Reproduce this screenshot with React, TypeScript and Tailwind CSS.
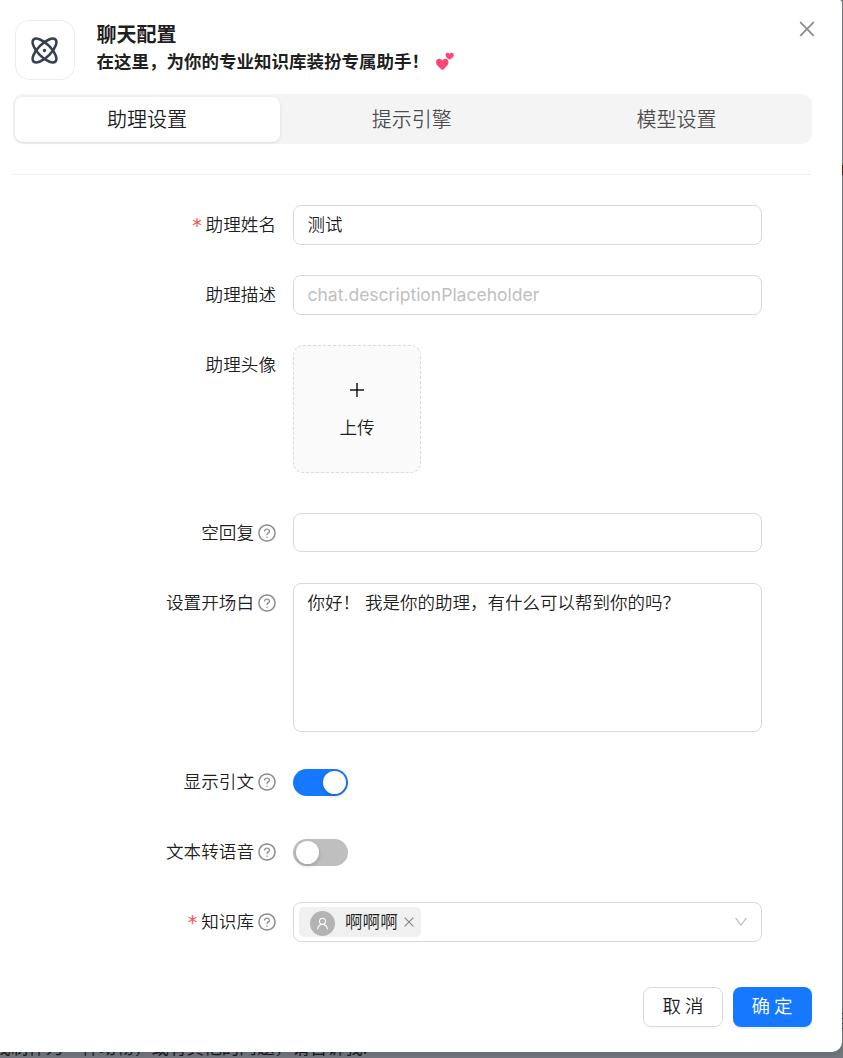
import React, { useState } from 'react';
import {
  AiOutlineClose,
  AiOutlineDown,
  AiOutlinePlus,
  AiOutlineQuestionCircle,
  AiOutlineUser,
} from 'react-icons/ai';

const TABS = ['助理设置', '提示引擎', '模型设置'];

interface FormRowProps {
  label: string;
  required?: boolean;
  help?: boolean;
  className?: string;
  children: React.ReactNode;
}

const FormRow: React.FC<FormRowProps> = ({ label, required = false, help = false, className = '', children }) => (
  <div className={`flex items-start ${className}`}>
    <div className="flex h-10 w-[264px] shrink-0 items-center justify-end">
      {required && <span className="mr-[3px] pt-0.5 font-['DejaVu_Sans_Mono',monospace] text-[19px] text-[#ff4d4f]">*</span>}
      <span className={help ? '' : 'mr-px'}>{label}</span>
      {help && <AiOutlineQuestionCircle size={20} className="ml-[3px] text-black/45" />}
    </div>
    <div className="ml-4 w-[469px]">{children}</div>
  </div>
);

interface SwitchProps {
  checked: boolean;
  onChange: (checked: boolean) => void;
  label: string;
}

const Switch: React.FC<SwitchProps> = ({ checked, onChange, label }) => (
  <div className="flex h-[41px] items-center">
    <button
      type="button"
      role="switch"
      aria-checked={checked}
      aria-label={label}
      onClick={() => onChange(!checked)}
      className={`flex h-[27px] w-[55px] items-center rounded-full px-[2.5px] ${
        checked ? 'justify-end bg-[#1677ff]' : 'justify-start bg-[#bfbfbf]'
      }`}
    >
      <span className="size-[23px] rounded-full bg-white shadow-[0_2px_4px_rgba(0,35,11,0.2)]" />
    </button>
  </div>
);

const AtomLogo = () => (
  <svg
    width="31"
    height="31"
    viewBox="0 0 24 24"
    fill="none"
    stroke="#344054"
    strokeWidth="2"
    strokeLinecap="round"
    strokeLinejoin="round"
  >
    <path strokeWidth="2.6" d="M12 12h.01" />
    <path d="M15.54 15.54c-4.69 4.68-10.07 6.9-12.03 4.95-1.95-1.96.27-7.34 4.95-12.03 4.69-4.68 10.07-6.9 12.03-4.95 1.95 1.96-.27 7.34-4.95 12.03Z" />
    <path d="M15.54 8.46c4.68 4.69 6.9 10.07 4.95 12.03-1.96 1.95-7.34-.27-12.03-4.95C3.78 10.85 1.56 5.47 3.51 3.51c1.96-1.95 7.34.27 12.03 4.95Z" />
  </svg>
);

const Hearts = () => (
  <svg width="20" height="19" viewBox="0 0 20 19" fill="#ff4777">
    <path d="M7.4 18.2C5 16.4 1 13.4 1 10.1c0-2 1.4-3.4 3.2-3.4 1.4 0 2.5.7 3.1 1.8.7-1.1 1.8-1.7 3.1-1.7 1.9 0 3.1 1.4 3.1 3.2 0 3.4-3.6 6.2-6.1 8.2Z" />
    <path d="M14.6 7.7c-1.8-1.2-4-2.7-4.1-4.7 0-1.3.8-2.2 2-2.2 1 0 1.7.4 2.1 1.2.5-.8 1.2-1.2 2.1-1.2 1.3 0 2.1 1 2.1 2.1 0 2-2.3 3.6-4.2 4.8Z" />
  </svg>
);

const inputClass =
  'block w-full rounded-lg border border-[#d9d9d9] bg-white px-[13.5px] text-[17.5px] outline-none placeholder:font-normal placeholder:text-[#bfbfbf]';

const App = () => {
  const [activeTab, setActiveTab] = useState(0);
  const [showQuote, setShowQuote] = useState(true);
  const [tts, setTts] = useState(false);

  return (
    <div className="relative h-[1058px] w-[843px] overflow-hidden bg-[#747a80] font-[Inter,'Noto_Sans_CJK_SC',sans-serif] text-[17.6px] leading-[27.5px] font-[350] text-black/90">
      {/* Dialog */}
      <div className="relative z-10 flex h-[1052px] w-[842px] flex-col rounded-tr-[3px] rounded-br-[10px] bg-white pr-[30px] pl-[13px] shadow-[0_3px_8px_rgba(0,0,0,0.15)]">
        <header className="flex h-[94px] shrink-0 items-start">
          <div className="mt-5 ml-[1.5px] flex size-[60px] items-center justify-center rounded-[14px] border border-[#eaecf0]">
            <AtomLogo />
          </div>
          <div className="mt-[21px] ml-[22px] text-[17.5px] font-bold">
            <h1 className="text-[20px] leading-7">聊天配置</h1>
            <p className="-mt-px flex items-center">
              在这里，为你的专业知识库装扮专属助手！
              <span className="ml-1.5"><Hearts /></span>
            </p>
          </div>
          <button type="button" aria-label="关闭" className="mt-[18px] -mr-[6px] ml-auto text-black/45">
            <AiOutlineClose size={22} />
          </button>
        </header>

        {/* Segmented tabs */}
        <div className="flex h-[50px] w-[799px] shrink-0 rounded-[10px] bg-[#f4f4f4] p-[2.5px] pl-0.5">
          {TABS.map((tab, index) => (
            <button
              key={tab}
              type="button"
              onClick={() => setActiveTab(index)}
              className={`flex-1 rounded-lg pt-[3px] pr-px text-[20px] ${
                index === activeTab
                  ? 'bg-white shadow-[0_1px_3px_rgba(0,0,0,0.1)]'
                  : 'text-black/70'
              }`}
            >
              {tab}
            </button>
          ))}
        </div>

        <form className="mt-[30px] flex w-[799px] flex-col border-t border-[#f0f0f0] pt-[30px]">
          <FormRow label="助理姓名" required className="h-[70px]">
            <input className={`${inputClass} h-10 pb-[3px]`} defaultValue="测试" />
          </FormRow>
          <FormRow label="助理描述" className="h-[70px]">
            <input className={`${inputClass} h-10 pb-0.5`} placeholder="chat.descriptionPlaceholder" />
          </FormRow>
          <FormRow label="助理头像" className="h-[168px]">
            <button
              type="button"
              className="flex size-32 flex-col items-center justify-center rounded-[10px] border border-dashed border-[#d9d9d9] bg-[#fafafa] pt-[3px]"
            >
              <AiOutlinePlus size={20} />
              <span className="mt-[14px]">上传</span>
            </button>
          </FormRow>
          <FormRow label="空回复" help className="h-[70px]">
            <input className={`${inputClass} h-[39px]`} />
          </FormRow>
          <FormRow label="设置开场白" help className="h-[179px]">
            <textarea
              className={`${inputClass} h-[149px] resize-none pt-[5px]`}
              defaultValue="你好！ 我是你的助理，有什么可以帮到你的吗？"
            />
          </FormRow>
          <FormRow label="显示引文" help className="h-[70px]">
            <Switch checked={showQuote} onChange={setShowQuote} label="显示引文" />
          </FormRow>
          <FormRow label="文本转语音" help className="h-[70px]">
            <Switch checked={tts} onChange={setTts} label="文本转语音" />
          </FormRow>
          <FormRow label="知识库" required help className="h-10">
            <div className="flex h-10 items-center rounded-lg border border-[#d9d9d9] pr-[12px] pl-[5px]">
              <div className="flex h-[30px] w-[122px] items-center rounded-[5px] bg-[#f0f0f0] pl-[11px]">
                <span className="mt-[3px] flex size-[25px] items-center justify-center rounded-full bg-[#b3b3b3] text-white">
                  <AiOutlineUser size={15} />
                </span>
                <span className="ml-2.5">啊啊啊</span>
                <AiOutlineClose size={14} className="ml-[4px] text-black/45" />
              </div>
              <AiOutlineDown size={16} className="ml-auto text-black/25" />
            </div>
          </FormRow>
        </form>

        <footer className="mt-[45px] flex w-[799px] justify-end gap-2.5">
          <button type="button" className="h-10 w-20 rounded-lg border border-[#d9d9d9] pl-1 text-[18.5px] tracking-[4px] shadow-[0_2px_0_rgba(0,0,0,0.02)]">
            取消
          </button>
          <button type="button" className="h-10 w-[79px] rounded-lg bg-[#1677ff] pl-[3px] text-[18.5px] tracking-[4px] text-white shadow-[0_2px_0_rgba(5,145,255,0.1)]">
            确定
          </button>
        </footer>
      </div>

      {/* Dimmed page behind the dialog */}
      <p className="-mt-[18px] -ml-[7px] whitespace-nowrap font-normal text-black/80">我制作为一种动物，或有其他的问题，请告诉我.</p>
      <span className="absolute top-[165px] right-0 h-2.5 w-px bg-[#5c1f08]" />
      <span className="absolute top-[1013px] right-0 flex h-4 w-px flex-col justify-between">
        <i className="h-px bg-[#20252a]" />
        <i className="h-px bg-[#20252a]" />
        <i className="h-px bg-[#20252a]" />
        <i className="h-px bg-[#20252a]" />
      </span>
    </div>
  );
};

export default App;
